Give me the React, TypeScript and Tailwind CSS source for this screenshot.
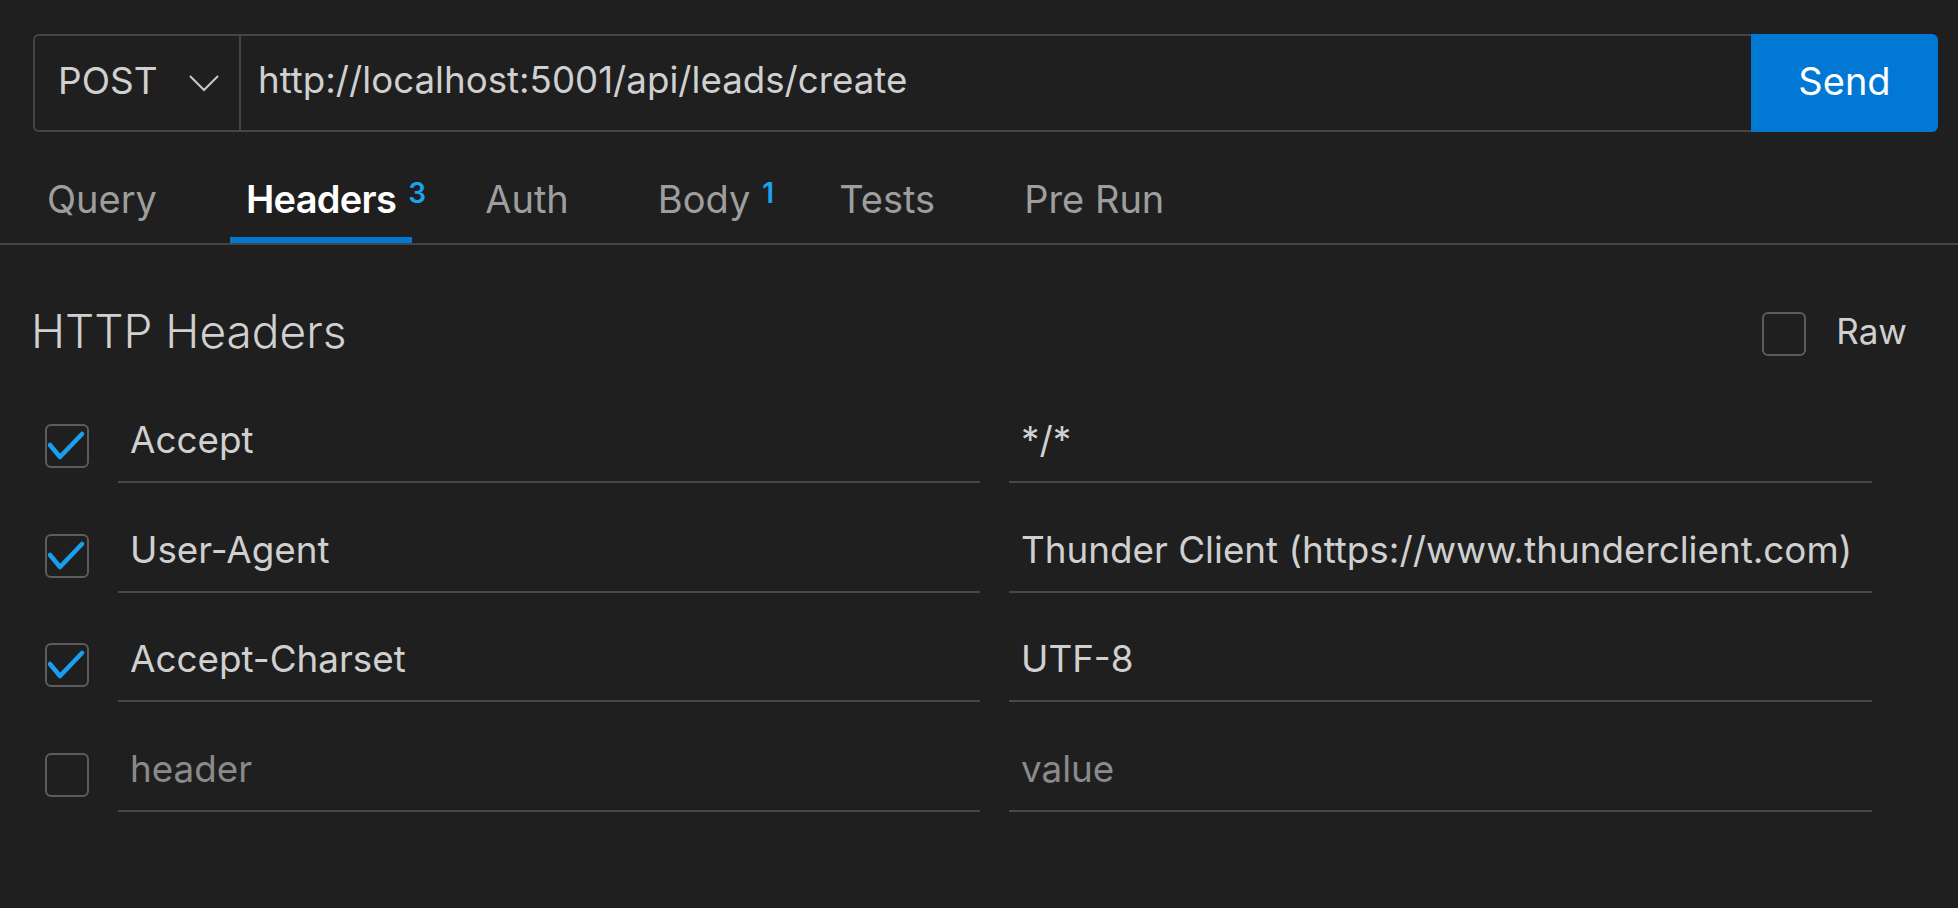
import React from 'react';

type HeaderRow = {
    key: string;
    value: string;
    checked: boolean;
    placeholder?: boolean;
};

const rows: HeaderRow[] = [
    { key: 'Accept', value: '*/*', checked: true },
    { key: 'User-Agent', value: 'Thunder Client (https://www.thunderclient.com)', checked: true },
    { key: 'Accept-Charset', value: 'UTF-8', checked: true },
    { key: 'header', value: 'value', checked: false, placeholder: true },
];

const tabs = [
    { label: 'Query' },
    { label: 'Headers', badge: '3', active: true },
    { label: 'Auth' },
    { label: 'Body', badge: '1' },
    { label: 'Tests' },
    { label: 'Pre Run' },
];

function CheckBox({ checked }: { checked: boolean }) {
    return (
        <div className="relative w-[44px] h-[44px] shrink-0 rounded-[6px] border-2 border-[#5c5c5c]">
            {checked && (
                <svg className="absolute -left-[2px] -top-[2px]" width="44" height="44" viewBox="0 0 44 44">
                    <polyline
                        points="5,21 15,33 37,10"
                        fill="none"
                        stroke="#1a9ff0"
                        strokeWidth="4.5"
                        strokeLinecap="round"
                        strokeLinejoin="round"
                    />
                </svg>
            )}
        </div>
    );
}

function App() {
    return (
        <div className="min-h-screen w-full bg-[#1f1f1f] font-['Inter','Liberation_Sans',sans-serif] text-[#cccccc]">
            {/* Request bar: method + url + send */}
            <div className="pt-[34px] pl-[33px] pr-[20px]">
                <div className="flex h-[98px]">
                    <div className="flex flex-1 border-2 border-r-0 border-[#454545] rounded-l-[6px]">
                        <div className="flex items-center w-[206px] pl-[23px] pr-[20px] border-r-2 border-[#454545]">
                            <span className="pb-[6px] text-[37px] leading-none text-[#d0d0d0]">POST</span>
                            <svg className="ml-auto" width="30" height="17" viewBox="0 0 30 17">
                                <polyline points="1,1 15,15 29,1" fill="none" stroke="#c8c8c8" strokeWidth="2" />
                            </svg>
                        </div>
                        <div className="flex items-center pl-[17px] pb-[6px] text-[36.7px] leading-none text-[#d0d0d0]">
                            http://localhost:5001/api/leads/create
                        </div>
                    </div>
                    <button className="w-[187px] h-full pb-[4px] bg-[#0078d4] rounded-r-[6px] text-white text-[38px] leading-none">
                        Send
                    </button>
                </div>
            </div>

            {/* Tabs */}
            <div className="flex gap-[57px] pl-[31px] border-b-2 border-[#444444]">
                {tabs.map((t) => (
                    <div
                        key={t.label}
                        className={
                            'relative h-[111px] flex items-end px-4 pb-[19px] border-b-[6px] ' +
                            (t.active ? 'border-[#0078d4]' : 'border-transparent')
                        }
                    >
                        <span
                            className={
                                'text-[38px] leading-none whitespace-nowrap ' +
                                (t.active ? 'text-white font-semibold tracking-[-0.7px]' : 'text-[#9e9e9e]')
                            }
                        >
                            {t.label}
                        </span>
                        {t.badge && (
                            <span className="absolute left-[calc(100%-4px)] top-[47px] text-[28px] leading-none font-semibold text-[#1aa3f0]">
                                {t.badge}
                            </span>
                        )}
                    </div>
                ))}
            </div>

            {/* HTTP Headers */}
            <div className="pt-[66px] pl-[31px] pr-[51px]">
                <div className="flex items-center justify-between h-[45px]">
                    <span className="pb-[5px] text-[46px] leading-none font-light text-[#d0d0d0]">HTTP Headers</span>
                    <div className="flex items-center gap-[30px]">
                        <CheckBox checked={false} />
                        <span className="pb-[4px] text-[35px] leading-none text-[#d0d0d0]">Raw</span>
                    </div>
                </div>
            </div>

            <div className="mt-[17.5px] pl-[45px] flex flex-col">
                {rows.map((r) => (
                    <div key={r.key} className="flex items-end h-[109.5px]">
                        <div className="mb-[15px]">
                            <CheckBox checked={r.checked} />
                        </div>
                        <div
                            className={
                                'ml-[29px] w-[862px] px-3 pb-[22px] border-b-2 border-[#474747] text-[36.8px] leading-none ' +
                                (r.placeholder ? 'text-[#8a8a8a]' : 'text-[#d0d0d0]')
                            }
                        >
                            {r.key}
                        </div>
                        <div
                            className={
                                'ml-[29px] w-[863px] px-3 pb-[22px] border-b-2 border-[#474747] text-[36.8px] leading-none whitespace-nowrap ' +
                                (r.placeholder ? 'text-[#8a8a8a]' : 'text-[#d0d0d0]')
                            }
                        >
                            {r.value}
                        </div>
                    </div>
                ))}
            </div>
        </div>
    );
}

export default App;
